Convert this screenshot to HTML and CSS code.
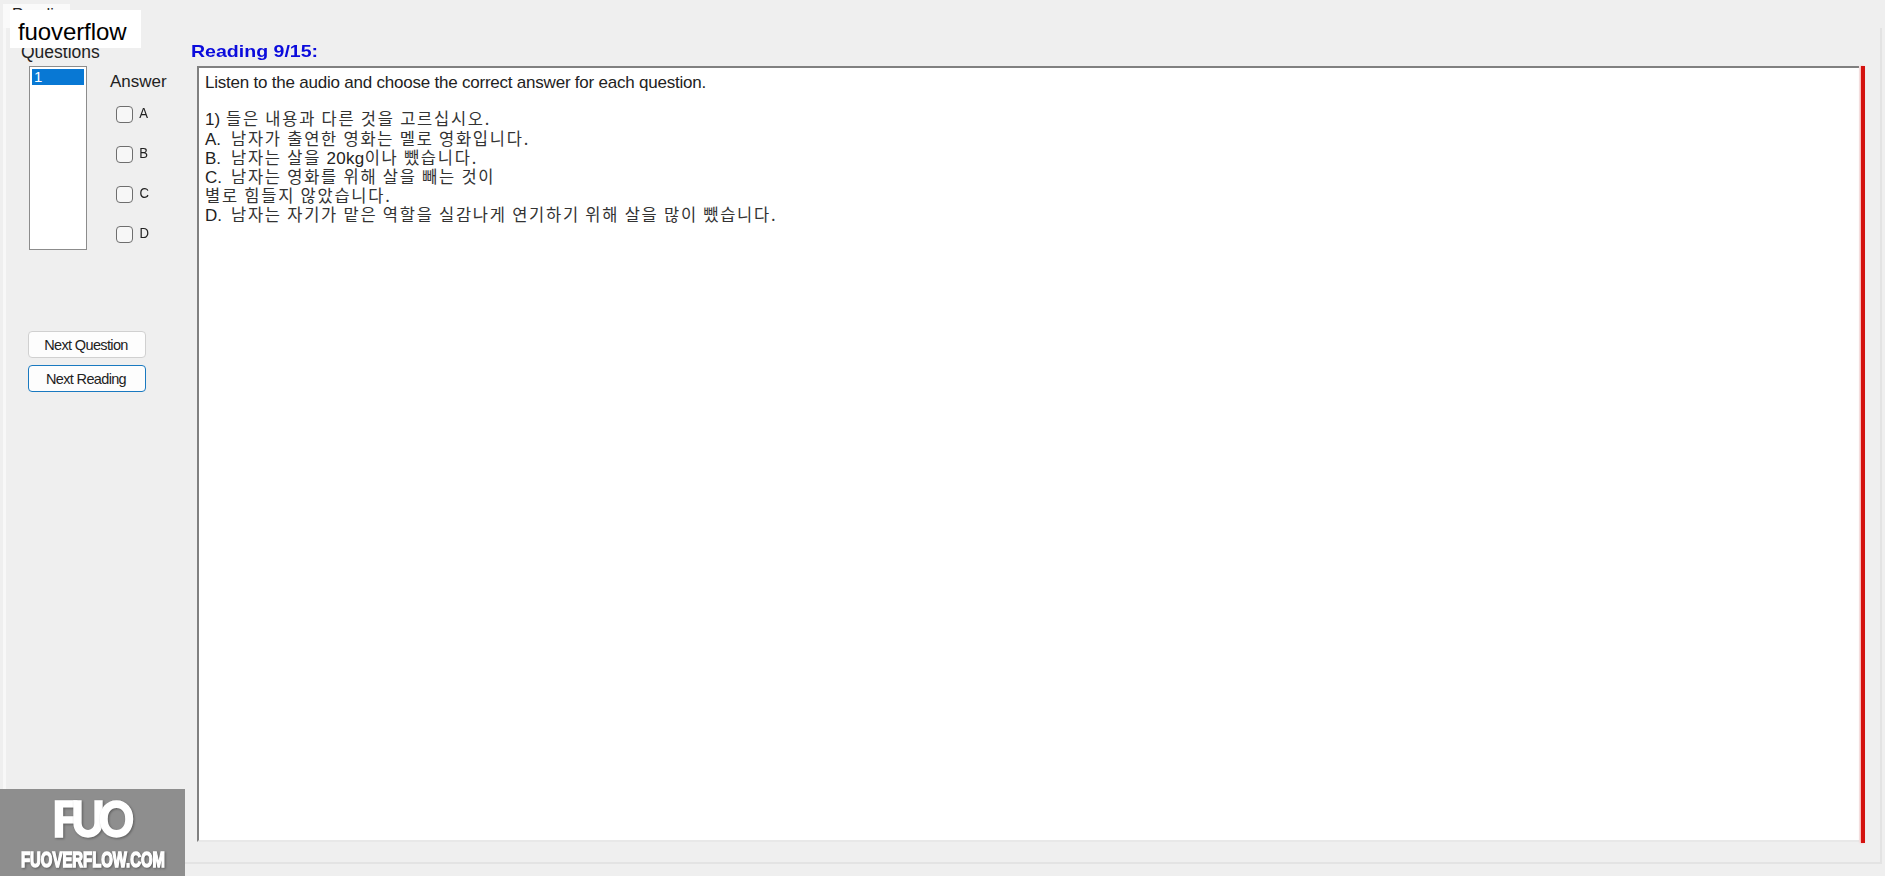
FILE: index.html
```
<!DOCTYPE html>
<html lang="en">
<head>
    <meta charset="UTF-8">
    <meta name="viewport" content="width=device-width, initial-scale=1.0">
    <title>Reading</title>
    <link rel="stylesheet" href="styles.css">
</head>
<body>
    <div class="tab">Reading</div>
    <div class="page">
        <div class="sidebar">
            <div class="questions-label">Questions</div>
            <div class="choices">
                <div class="question-list">
                    <div class="selected">1</div>
                </div>
                <div class="answers">
                    <div class="answer-label">Answer</div>
                    <label><input type="checkbox"><span>A</span></label>
                    <label><input type="checkbox"><span>B</span></label>
                    <label><input type="checkbox"><span>C</span></label>
                    <label><input type="checkbox"><span>D</span></label>
                </div>
            </div>
            <div class="buttons">
                <button>Next Question</button>
                <button class="focused">Next Reading</button>
            </div>
        </div>
        <div class="main">
            <h1><span>Reading 9/15:</span></h1>
            <div class="reading-row">
                <div class="reading">
                    <p class="intro">Listen to the audio and choose the correct answer for each question.</p>
                    <p class="first"><span class="number">1)</span><span class="ko">들은 내용과 다른 것을 고르십시오.</span></p>
                    <p><span class="letter">A.</span><span class="ko">남자가 출연한 영화는 멜로 영화입니다.</span></p>
                    <p><span class="letter">B.</span><span class="ko">남자는 살을 <span class="num">20kg</span>이나 뺐습니다.</span></p>
                    <p><span class="letter">C.</span><span class="ko">남자는 영화를 위해 살을 빼는 것이</span></p>
                    <p><span class="ko">별로 힘들지 않았습니다.</span></p>
                    <p><span class="letter">D.</span><span class="ko">남자는 자기가 맡은 역할을 실감나게 연기하기 위해 살을 많이 뺐습니다.</span></p>
                </div>
                <div class="red-line"></div>
            </div>
        </div>
    </div>

    <div class="name-tag">fuoverflow</div>

    <div class="watermark">
        <svg width="185" height="87" viewBox="0 0 185 87">
            <g class="mark">
                <text x="52" y="48" textLength="26" lengthAdjust="spacingAndGlyphs">F</text>
                <text x="71" y="48" textLength="34" lengthAdjust="spacingAndGlyphs">U</text>
                <text x="99" y="48" textLength="35" lengthAdjust="spacingAndGlyphs">O</text>
            </g>
            <text class="site" x="21" y="78" textLength="144" lengthAdjust="spacingAndGlyphs">FUOVERFLOW.COM</text>
        </svg>
    </div>
</body>
</html>
```
FILE: styles.css
```
* {
    box-sizing: border-box;
}

body {
    margin: 0;
    height: 876px;
    padding: 4px 3px 12px;
    display: flex;
    flex-direction: column;
    overflow: hidden;
    background-color: #efefef;
    color: #222;
    font-family: "Liberation Sans", Arial, sans-serif;
    font-size: 17px;
}

.tab {
    width: 67px;
    height: 24px;
    padding-left: 9px;
    background-color: #fafafa;
    font-size: 16px;
    line-height: 22px;
}

.page {
    flex: 1;
    width: 1879px;
    display: flex;
    border-left: 3px solid #f8f8f8;
    border-right: 2px solid #e3e3e3;
    border-bottom: 2px solid #e3e3e3;
}

.sidebar {
    width: 185px;
    padding: 13px 0 0 15px;
}

.questions-label {
    height: 25px;
    line-height: 22px;
    font-size: 17.5px;
}

.choices {
    display: flex;
    margin-left: 8px;
}

.question-list {
    width: 58px;
    height: 184px;
    padding: 2px;
    border: 1px solid #8c8c8c;
    background-color: #fff;
}

.selected {
    height: 16px;
    padding-left: 2px;
    background-color: #0878d4;
    color: #fff;
    font-size: 15px;
    line-height: 16px;
}

.answers {
    margin-left: 23px;
}

.answer-label {
    height: 28px;
    padding-top: 6px;
    line-height: 20px;
}

.answers label {
    display: flex;
    align-items: center;
    height: 40px;
    padding-left: 6px;
    font-size: 15.5px;
}

.answers label span {
    padding: 0 0 3px 6px;
    transform: scaleX(0.85);
}

input[type="checkbox"] {
    appearance: none;
    width: 17px;
    height: 17px;
    margin: 0;
    border: 1px solid #6e6e6e;
    border-radius: 4px;
    background-color: #f7f7f7;
}

.buttons {
    display: flex;
    flex-direction: column;
    gap: 7px;
    margin: 77px 0 0 7px;
}

button {
    width: 118px;
    height: 27px;
    padding: 0 2px 0 0;
    border: 1px solid #d0d0d0;
    border-radius: 4px;
    background-color: #fdfdfd;
    color: #222;
    font-family: inherit;
    font-size: 14.5px;
    letter-spacing: -0.65px;
}

button.focused {
    border-color: #1979c0;
}

.main {
    padding-top: 13px;
}

h1 {
    height: 25px;
    margin: 0;
    color: #0b0bdc;
    font-size: 17px;
    line-height: 22px;
}

h1 span {
    display: inline-block;
    transform: scaleX(1.15);
    transform-origin: left;
}

.reading-row {
    display: flex;
    margin-left: 6px;
}

.reading {
    width: 1662px;
    height: 776px;
    padding: 5px 6px;
    border-top: 2px solid #808080;
    border-left: 2px solid #808080;
    border-bottom: 2px solid #e8e8e8;
    background-color: #fff;
    line-height: 19px;
}

.reading p {
    display: flex;
    height: 18.9px;
    margin: 0;
    white-space: pre;
}

.reading .intro {
    height: 36px;
    letter-spacing: -0.22px;
}

.reading .first {
    height: 20px;
}

.number {
    width: 21px;
}

.letter {
    width: 26px;
}

.number,
.letter {
    padding-top: 1px;
}

.ko {
    color: #333;
    font-family: "Noto Sans CJK KR", sans-serif;
    font-size: 16.5px;
    letter-spacing: 1.75px;
}

.num {
    color: #222;
    font-family: "Liberation Sans", Arial, sans-serif;
    font-size: 17px;
    letter-spacing: 0.3px;
}

.red-line {
    width: 4px;
    height: 777px;
    margin-left: 2px;
    background-color: #d4120f;
    box-shadow: -1px 0 2px #ffb0b0;
}

/* labels lying over the window */
.name-tag {
    position: absolute;
    left: 10px;
    top: 10px;
    width: 131px;
    height: 38px;
    padding-left: 8px;
    background-color: #fff;
    color: #000;
    font-size: 24px;
    line-height: 43px;
    letter-spacing: -0.1px;
}

.watermark {
    position: absolute;
    left: 0;
    bottom: 0;
    width: 185px;
    height: 87px;
    background-color: #8e8e8e;
}

.watermark svg {
    display: block;
}

.watermark text {
    fill: #fff;
    stroke: #fff;
    filter: drop-shadow(1px 1px 1px rgba(0, 0, 0, 0.35));
}

.mark text {
    font-family: Lato, sans-serif;
    font-size: 49px;
    font-weight: 900;
    stroke-width: 1.5px;
}

.site {
    font-size: 22px;
    font-weight: bold;
    stroke-width: 1.5px;
}
```
